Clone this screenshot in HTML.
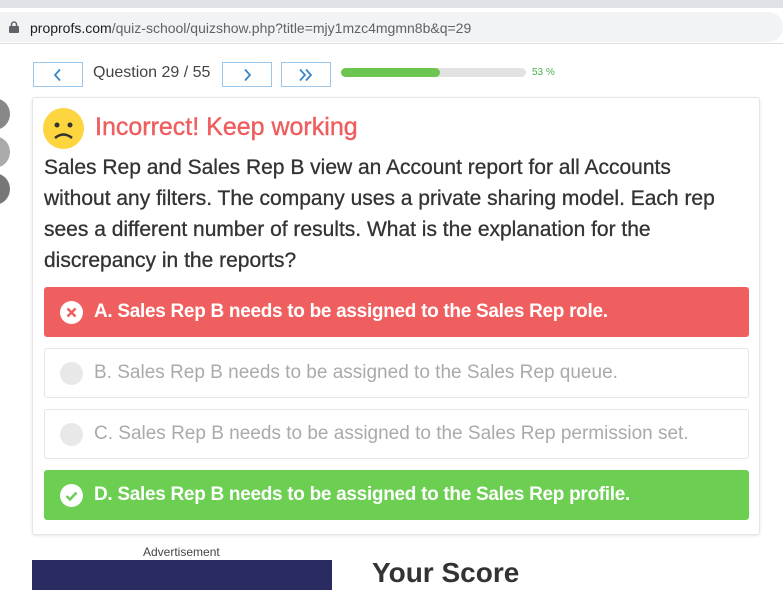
<!DOCTYPE html>
<html><head><style>
*{margin:0;padding:0;box-sizing:border-box}
body{width:783px;height:581px;overflow:hidden;background:#fff;font-family:"Liberation Sans",sans-serif;position:relative}
.tabs{position:absolute;left:0;top:0;width:783px;height:8px;background:#dee1e6}
.addr{position:absolute;left:0;top:8px;width:783px;height:34px;background:#fff}
.addrin{position:absolute;left:0;top:4px;width:783px;height:30px;background:#f1f3f4;border-radius:0 15px 15px 0}
.url{position:absolute;left:30px;top:8px;font-size:14px;color:#5f6368}
.url b{font-weight:normal;color:#202124}
.line{position:absolute;left:0;top:43px;width:783px;height:1px;background:#ddd}
.btn{position:absolute;top:62px;height:25px;border:1px solid #9cc7e8;background:#fff}
.btn svg{display:block;margin:5px auto 0}
.q{position:absolute;left:93px;top:64px;font-size:16px;color:#444}
.bar{position:absolute;left:341px;top:68px;width:185px;height:9px;border-radius:5px;background:#e2e2e2}
.bar div{width:99px;height:9px;border-radius:5px;background:#6cc551}
.pct{position:absolute;left:532px;top:67px;font-size:10px;color:#4caf50}
.side{position:absolute;left:-22px;width:32px;height:32px;border-radius:50%;background:#888}
.card{position:absolute;left:32px;top:97px;width:728px;height:438px;border:1px solid #e6e6e6;border-radius:3px;box-shadow:0 1px 3px rgba(0,0,0,.1);background:#fff}
.emoji{position:absolute;left:43px;top:108px;width:41px;height:41px;border-radius:50%;background:#fcd53f}
.title{position:absolute;left:95px;top:113px;font-size:25px;color:#ee5e5e;-webkit-text-stroke:.4px #ee5e5e}
.qt{position:absolute;left:44px;top:152px;width:688px;font-size:21px;line-height:31px;color:#333;-webkit-text-stroke:.3px #333}
.opt{position:absolute;left:44px;width:705px;height:50px;border:1px solid #e5e5e5;border-radius:3px;font-size:19px;line-height:48px;padding-left:49px;color:#aaa}
.opt .c{position:absolute;left:15px;top:13px;width:23px;height:23px;border-radius:50%;background:#e8e8e8}
.opt .c svg{display:block}
.red{background:#f05f5f;border-color:#f05f5f;color:#fff;font-weight:bold;letter-spacing:-.3px}
.green{background:#6ccf52;border-color:#6ccf52;color:#fff;font-weight:bold;letter-spacing:-.3px}
.red .c,.green .c{background:#fff}
.ad{position:absolute;left:143px;top:545px;font-size:12px;color:#444}
.adb{position:absolute;left:32px;top:560px;width:300px;height:30px;background:#2a2b60}
.score{position:absolute;left:372px;top:557px;font-size:28px;font-weight:bold;color:#333}
</style></head><body>
<div class="tabs"></div>
<div class="addr"><div class="addrin"><svg style="position:absolute;left:9px;top:9px" width="10" height="12" viewBox="0 0 10 12"><rect x="0" y="5" width="10" height="7" rx="1" fill="#5f6368"/><path d="M2.5 5V3.5a2.5 2.5 0 015 0V5" stroke="#5f6368" stroke-width="1.5" fill="none"/></svg><div class="url"><b>proprofs.com</b>/quiz-school/quizshow.php?title=mjy1mzc4mgmn8b&amp;q=29</div></div></div>
<div class="line"></div>
<div class="btn" style="left:33px;width:50px"><svg width="12" height="14"><path d="M8 1.5L3 7l5 5.5" stroke="#3a86c8" stroke-width="1.8" fill="none"/></svg></div>
<div class="q">Question 29 / 55</div>
<div class="btn" style="left:222px;width:50px"><svg width="12" height="14"><path d="M4 1.5L9 7l-5 5.5" stroke="#3a86c8" stroke-width="1.8" fill="none"/></svg></div>
<div class="btn" style="left:281px;width:50px"><svg width="18" height="14"><path d="M3 1.5L8 7l-5 5.5M9 1.5L14 7l-5 5.5" stroke="#3a86c8" stroke-width="1.8" fill="none"/></svg></div>
<div class="bar"><div></div></div>
<div class="pct">53 %</div>
<div class="side" style="top:98px"></div>
<div class="side" style="top:136px;background:#aaa"></div>
<div class="side" style="top:173px;background:#777"></div>
<div class="card"></div>
<div class="emoji"><svg width="41" height="41" viewBox="0 0 41 41"><circle cx="14" cy="17" r="2.5" fill="#333"/><circle cx="27" cy="17" r="2.5" fill="#333"/><path d="M12 30q8.5-7 17 0" stroke="#333" stroke-width="2.5" fill="none"/></svg></div>
<div class="title">Incorrect! Keep working</div>
<div class="qt">Sales Rep and Sales Rep B view an Account report for all Accounts without any filters. The company uses a private sharing model. Each rep sees a different number of results. What is the explanation for the discrepancy in the reports?</div>
<div class="opt red" style="top:287px"><span class="c"><svg width="23" height="23"><path d="M7.5 7.5l8 8M15.5 7.5l-8 8" stroke="#f05f5f" stroke-width="2.5"/></svg></span>A. Sales Rep B needs to be assigned to the Sales Rep role.</div>
<div class="opt" style="top:348px"><span class="c"></span>B. Sales Rep B needs to be assigned to the Sales Rep queue.</div>
<div class="opt" style="top:409px"><span class="c"></span>C. Sales Rep B needs to be assigned to the Sales Rep permission set.</div>
<div class="opt green" style="top:470px"><span class="c"><svg width="23" height="23"><path d="M6.5 12l3.5 3.5 6.5-7" stroke="#6ccf52" stroke-width="2.5" fill="none"/></svg></span>D. Sales Rep B needs to be assigned to the Sales Rep profile.</div>
<div class="ad">Advertisement</div>
<div class="adb"></div>
<div class="score">Your Score</div>
</body></html>
